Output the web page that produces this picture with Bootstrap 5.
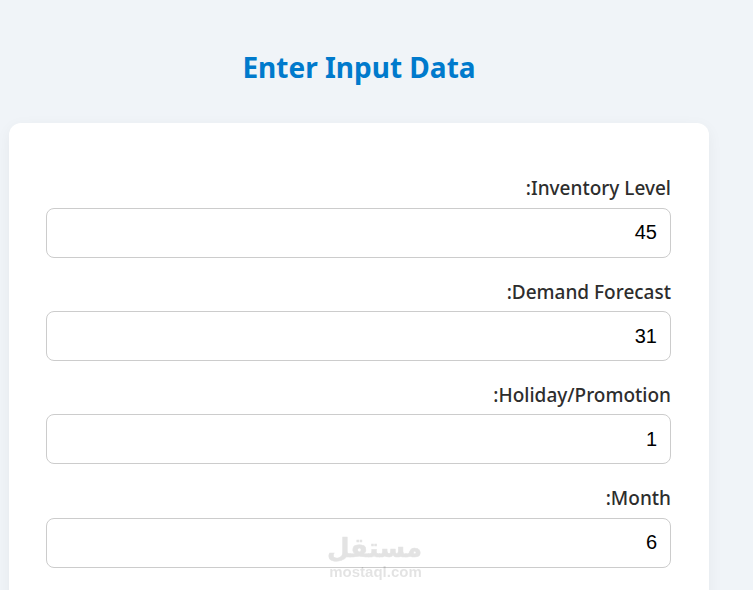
<!DOCTYPE html>
<html lang="en" dir="rtl">
<head>
<meta charset="utf-8">
<title>Enter Input Data</title>
<link href="https://cdn.jsdelivr.net/npm/bootstrap@5.3.0/dist/css/bootstrap.min.css" rel="stylesheet">
<style>
html,body{height:590px;overflow:hidden}
body{background:#f0f4f8;font-family:"Noto Sans","Open Sans",sans-serif;color:#333}
.page-wrap{width:700px;margin-left:auto;margin-right:44px;padding-top:47px}
.page-title{color:#007acc;font-size:28px;font-weight:700;line-height:40px;margin:0 0 36px;text-align:center;font-family:"Noto Sans",sans-serif}
.form-panel{background:#fff;border-radius:12px;box-shadow:0 4px 15px rgba(0,0,0,.05);padding:53.3px 38px 60px 37px;height:600px}
.field-row{margin-bottom:21.83px}
.field-label{display:block;font-size:19px;font-weight:500;line-height:24px;margin-bottom:7.5px;color:#2d2d2d}
.field-input{height:50px;border:1px solid #ccc;border-radius:8px;font-family:"Liberation Sans",sans-serif;font-size:20px;color:#000;padding:10px 13px;box-shadow:none}
.stamp{position:fixed;left:329px;top:533px;width:93px;text-align:center;color:#000;opacity:.11;pointer-events:none;direction:rtl}
.stamp-ar{font-family:"DejaVu Sans",sans-serif;font-weight:700;font-size:26px;line-height:30px;display:block;-webkit-text-stroke:.6px #000}
.stamp-en{font-family:"Liberation Sans",sans-serif;font-weight:700;font-size:15px;line-height:17px;display:block;direction:ltr}
</style>
</head>
<body>
<div class="page-wrap">
  <h1 class="page-title">Enter Input Data</h1>
  <form class="form-panel">
    <div class="field-row"><label class="field-label" for="a">Inventory Level:</label><input id="a" class="form-control field-input" value="45"></div>
    <div class="field-row"><label class="field-label" for="b">Demand Forecast:</label><input id="b" class="form-control field-input" value="31"></div>
    <div class="field-row"><label class="field-label" for="c">Holiday/Promotion:</label><input id="c" class="form-control field-input" value="1"></div>
    <div class="field-row"><label class="field-label" for="d">Month:</label><input id="d" class="form-control field-input" value="6"></div>
  </form>
</div>
<div class="stamp"><span class="stamp-ar">مستقل</span><span class="stamp-en">mostaql.com</span></div>
<script src="https://cdn.jsdelivr.net/npm/bootstrap@5.3.0/dist/js/bootstrap.bundle.min.js"></script>
</body>
</html>
